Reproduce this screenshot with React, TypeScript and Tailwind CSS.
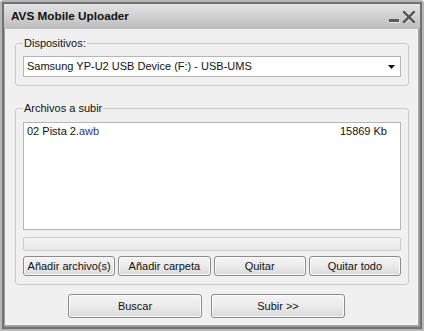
import React from "react";

function Btn({ children, className = "" }: { children: React.ReactNode; className?: string }) {
  return (
    <div
      className={`flex items-center justify-center border border-[#8b8b8b] rounded-[3px] bg-linear-to-b from-[#f4f4f4] via-[#ebebeb] to-[#dadada] shadow-[inset_0_0_0_1px_#fbfbfb] text-[#111] ${className}`}
    >
      {children}
    </div>
  );
}

export default function App() {
  return (
    <div className="w-[424px] h-[331px] font-['Liberation_Sans',Arial,sans-serif] text-[11px] leading-[13px] text-black border-2 border-[#b7b7b7] rounded-t-[3px] bg-[#707070]">
      <div className="h-full flex flex-col border-2 border-[#717171]">
        {/* Title bar */}
        <div className="h-[25px] shrink-0 flex items-center pl-[7px] pr-[5px] pb-[2px] bg-linear-to-b from-[#e3e3e3] to-[#bdbdbd]">
          <span className="font-bold text-[11.75px] text-[#111]">AVS Mobile Uploader</span>
          <svg className="ml-auto mt-[2px]" width="26" height="12" viewBox="0 0 26 12">
            <rect x="0.5" y="9" width="10" height="3" fill="#fafafa" opacity="0.6" />
            <rect x="0" y="8" width="10" height="3" fill="#5a5a5a" />
            <path d="M15 1 L25 11 M25 1 L15 11" stroke="#f4f4f4" strokeWidth="2.6" strokeLinecap="square" transform="translate(0.6 0.8)" opacity="0.5" />
            <path d="M15 1 L25 11 M25 1 L15 11" stroke="#535353" strokeWidth="2.4" strokeLinecap="square" />
          </svg>
        </div>
        {/* Body */}
        <div className="flex-1 flex flex-col bg-[#9d9d9d] pl-[1px] pr-[2px] pb-[2px]">
          <div className="flex-1 flex flex-col bg-[#f0f0f0] border-r border-b border-[#f9f9f9] pt-[8px] pl-[10px] pr-[8px]">
            {/* Group 1 */}
            <fieldset className="border border-[#cbcbcb] rounded-[3px] px-[7px] pt-[6px] pb-[8px]">
              <legend className="px-[1px] text-[#111]">Dispositivos:</legend>
              <div className="h-[21px] bg-white border border-[#b6b6b6] flex items-center pl-[3px] pr-[5px]">
                <span className="text-[#111]">Samsung YP-U2 USB Device (F:) - USB-UMS</span>
                <svg className="ml-auto" width="7" height="4" viewBox="0 0 7 4">
                  <path d="M0 0 H7 L3.5 4 Z" fill="#111" />
                </svg>
              </div>
            </fieldset>
            {/* Group 2 */}
            <fieldset className="mt-[16px] border border-[#cbcbcb] rounded-[3px] px-[7px] pt-[7px] pb-[8px]">
              <legend className="px-[1px] text-[#111]">Archivos a subir</legend>
              <div className="h-[108px] bg-white border border-[#b6b6b6]">
                <div className="flex justify-between pl-[3px] pr-[13px] pt-[2px] text-[#111]">
                  <span>
                    02 Pista 2.<span className="text-[#34346e]">awb</span>
                  </span>
                  <span>15869 Kb</span>
                </div>
              </div>
              <div className="mt-[7px] h-[14px] border border-[#cdcdcd] rounded-[2px] bg-linear-to-b from-[#f5f5f5] to-[#e8e8e8]" />
              <div className="mt-[5px] grid grid-cols-4 gap-[3px] h-[20px]">
                <Btn>Añadir archivo(s)</Btn>
                <Btn>Añadir carpeta</Btn>
                <Btn>Quitar</Btn>
                <Btn>Quitar todo</Btn>
              </div>
            </fieldset>
            {/* Bottom buttons */}
            <div className="mt-[9px] ml-[53px] flex gap-[9px]">
              <Btn className="w-[134px] h-[24px]">Buscar</Btn>
              <Btn className="w-[134px] h-[24px]">Subir &gt;&gt;</Btn>
            </div>
          </div>
        </div>
      </div>
    </div>
  );
}
